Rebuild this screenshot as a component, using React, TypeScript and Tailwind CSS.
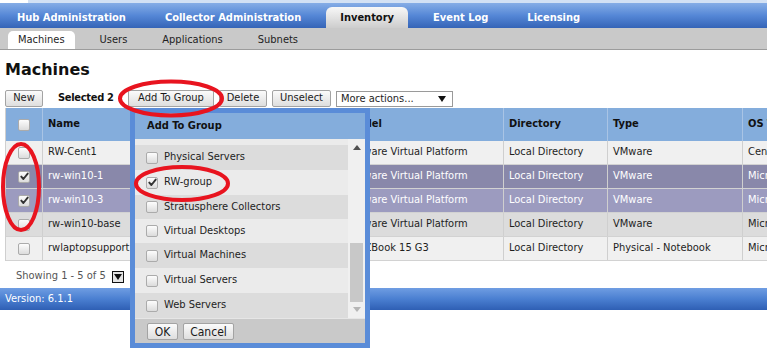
import React from "react";

function CheckMark({ color = "#333" }: { color?: string }) {
  return (
    <svg width="9" height="9" viewBox="0 0 9 9">
      <path d="M1.3 4.6 L3.4 7 L7.7 1.6" stroke={color} strokeWidth="1.9" fill="none" strokeLinecap="round" strokeLinejoin="round" />
    </svg>
  );
}

function Box({ checked }: { checked?: boolean }) {
  return (
    <span className="flex items-center justify-center w-[12px] h-[12px] rounded-[2px] border border-[#ababab] bg-gradient-to-b from-[#fdfdfd] to-[#dcdcdc] shrink-0">
      {checked && <CheckMark />}
    </span>
  );
}

function Btn({ children, className = "" }: { children: React.ReactNode; className?: string }) {
  return (
    <div className={"h-[17px] px-[7px] flex items-center border border-[#a3a3a3] rounded-[2px] bg-gradient-to-b from-[#fbfbfb] to-[#dedede] text-[#1a1a1a] whitespace-nowrap " + className}>
      {children}
    </div>
  );
}

const rows = [
  { name: "RW-Cent1", model: "VMware Virtual Platform", dir: "Local Directory", type: "VMware", os: "CentOS Linux 7", bg: "bg-[#f0f0f0]", text: "text-[#1e1e1e]", checked: false },
  { name: "rw-win10-1", model: "VMware Virtual Platform", dir: "Local Directory", type: "VMware", os: "Microsoft Windows 10", bg: "bg-[#8988aa]", text: "text-white", checked: true },
  { name: "rw-win10-3", model: "VMware Virtual Platform", dir: "Local Directory", type: "VMware", os: "Microsoft Windows 10", bg: "bg-[#9c9bbf]", text: "text-white", checked: true },
  { name: "rw-win10-base", model: "VMware Virtual Platform", dir: "Local Directory", type: "VMware", os: "Microsoft Windows 10", bg: "bg-[#dcdcdc]", text: "text-[#1e1e1e]", checked: false },
  { name: "rwlaptopsupport", model: "HP ZBook 15 G3", dir: "Local Directory", type: "Physical - Notebook", os: "Microsoft Windows 10", bg: "bg-[#f0f0f0]", text: "text-[#1e1e1e]", checked: false },
];

const groups = [
  { label: "Physical Desktops", bg: "bg-[#ebebeb]", h: "h-[25px] mt-[-19px]", checked: false },
  { label: "Physical Servers", bg: "bg-[#dcdcdc]", h: "h-[25px]", checked: false },
  { label: "RW-group", bg: "bg-[#ebebeb]", h: "h-[25px]", checked: true },
  { label: "Stratusphere Collectors", bg: "bg-[#dcdcdc]", h: "h-[24px]", checked: false },
  { label: "Virtual Desktops", bg: "bg-[#ebebeb]", h: "h-[24px]", checked: false },
  { label: "Virtual Machines", bg: "bg-[#dcdcdc]", h: "h-[25px]", checked: false },
  { label: "Virtual Servers", bg: "bg-[#ebebeb]", h: "h-[25px]", checked: false },
  { label: "Web Servers", bg: "bg-[#dcdcdc]", h: "h-[25px]", checked: false },
];

const cols = "grid grid-cols-[37px_300px_161px_104px_135px_200px]";

export default function App() {
  return (
    <div className="relative w-[767px] h-[357px] overflow-hidden bg-white font-['DejaVu_Sans_Condensed','DejaVu_Sans',sans-serif] [font-stretch:semi-condensed] text-[11px] text-[#1e1e1e]">
      {/* top strip */}
      <div className="flex h-[3px]">
        <div className="w-[28px] bg-white" />
        <div className="flex-1 bg-[#d3e1f4]" />
      </div>
      {/* main tabs */}
      <div className="h-[25px] flex items-end pl-[3px] gap-[11px] bg-gradient-to-b from-[#86ade6] via-[#5587d6] to-[#3564b7]">
        {["Hub Administration", "Collector Administration"].map((t) => (
          <div key={t} className="h-[21px] px-[14px] pt-[1px] flex items-center text-white font-bold">{t}</div>
        ))}
        <div className="h-[21px] px-[14px] pt-[1px] flex items-center font-bold text-[#111] rounded-t-[6px] bg-gradient-to-b from-[#f8f8f8] to-[#cdcdcd]">Inventory</div>
        {["Event Log", "Licensing"].map((t) => (
          <div key={t} className="h-[21px] px-[14px] pt-[1px] flex items-center text-white font-bold">{t}</div>
        ))}
      </div>
      {/* sub tabs */}
      <div className="h-[22px] flex items-end pl-[8px] gap-[15px] bg-[#c9c9c9] border-b border-[#9c9c9c]">
        <div className="h-[18px] px-[10px] flex items-center bg-white rounded-t-[5px]">Machines</div>
        <div className="h-[18px] px-[10px] flex items-center">Users</div>
        <div className="h-[18px] px-[10px] flex items-center">Applications</div>
        <div className="h-[18px] px-[10px] flex items-center">Subnets</div>
      </div>

      <div className="pl-[5px]">
        <h1 className="mt-[10px] h-[20px] leading-[20px] text-[16px] font-bold font-['DejaVu_Sans',sans-serif] [font-stretch:normal] text-[#111]">Machines</h1>
        {/* toolbar */}
        <div className="mt-[10px] h-[18px] flex items-start">
          <Btn className="w-[38px] justify-center">New</Btn>
          <div className="ml-[15px] w-[70px] h-[17px] flex items-center font-bold tracking-[-0.3px] text-[#111]">Selected 2</div>
          <Btn className="w-[86px] justify-center">Add To Group</Btn>
          <Btn className="ml-[5px] w-[48px] justify-center">Delete</Btn>
          <Btn className="ml-[5px] w-[59px] justify-center">Unselect</Btn>
          <div className="ml-[5px] mt-[1px] w-[117px] h-[16px] flex items-center justify-between pl-[4px] pr-[6px] border border-[#9a9a9a] bg-white">
            <span>More actions...</span>
            <svg width="8" height="6" viewBox="0 0 8 6"><path d="M0 0 H8 L4 6 Z" fill="#111" /></svg>
          </div>
        </div>
        {/* table */}
        <div className="w-[937px] border-l border-[#cfcfcf]">
          <div className={cols + " h-[33px] bg-[#84addc] font-bold text-[#111]"}>
            <div className="flex items-center justify-center border-r border-[#a9c4e5]"><Box /></div>
            <div className="flex items-center px-[5px] border-r border-[#a9c4e5]">Name</div>
            <div className="flex items-center px-[5px] border-r border-[#a9c4e5]">Model</div>
            <div className="flex items-center px-[5px] border-r border-[#a9c4e5]">Directory</div>
            <div className="flex items-center px-[5px] border-r border-[#a9c4e5]">Type</div>
            <div className="flex items-center px-[5px] border-r border-[#a9c4e5]">OS Type</div>
          </div>
          {rows.map((r) => (
            <div key={r.name} className={cols + " h-[24px] border-b border-[#d2d2d2] " + r.bg + " " + r.text}>
              <div className="flex items-center justify-center border-r border-[#cfcfcf]"><Box checked={r.checked} /></div>
              <div className="flex items-center px-[5px] border-r border-[#cfcfcf] whitespace-nowrap overflow-hidden">{r.name}</div>
              <div className="flex items-center px-[5px] border-r border-[#cfcfcf] whitespace-nowrap overflow-hidden">{r.model}</div>
              <div className="flex items-center px-[5px] border-r border-[#cfcfcf] whitespace-nowrap overflow-hidden">{r.dir}</div>
              <div className="flex items-center px-[5px] border-r border-[#cfcfcf] whitespace-nowrap overflow-hidden">{r.type}</div>
              <div className="flex items-center px-[5px] border-r border-[#cfcfcf] whitespace-nowrap overflow-hidden">{r.os}</div>
            </div>
          ))}
        </div>
        {/* paging */}
        <div className="h-[27px] pt-[4px] pl-[11px] flex items-center gap-[6px] text-[#555]">
          <span>Showing 1 - 5 of 5</span>
          <span className="w-[12px] h-[12px] border border-[#111] bg-[#e4e4e4] flex items-center justify-center">
            <svg width="8" height="6" viewBox="0 0 8 6"><path d="M0 0 H8 L4 6 Z" fill="#111" /></svg>
          </span>
        </div>
      </div>
      {/* footer */}
      <div className="h-[22px] pl-[5px] flex items-center text-white bg-gradient-to-b from-[#6f9de2] via-[#4a7fd1] to-[#2f5fb4]">Version: 6.1.1</div>

      {/* popup */}
      <div className="absolute left-[130px] top-[108px] w-[240px] h-[240px] border-[5px] border-[#5a8cd8] flex flex-col bg-[#ebebeb]">
        <div className="h-[26px] bg-[#84addc] flex items-center pl-[12px] font-bold text-[#111]">Add To Group</div>
        <div className="h-[179px] flex">
          <div className="w-[213px] overflow-hidden flex flex-col">
            {groups.map((g) => (
              <div key={g.label} className={"shrink-0 flex items-center pl-[11px] gap-[6px] " + g.bg + " " + g.h}>
                <Box checked={g.checked} />
                <span className="whitespace-nowrap">{g.label}</span>
              </div>
            ))}
          </div>
          <div className="w-[17px] bg-[#f0f0f0] flex flex-col">
            <div className="h-[17px] flex items-center justify-center">
              <svg width="8" height="5" viewBox="0 0 8 5"><path d="M0 5 H8 L4 0 Z" fill="#505050" /></svg>
            </div>
            <div className="flex-1">
              <div className="ml-[2px] mt-[87px] w-[13px] h-[59px] bg-[#c8c8c8]" />
            </div>
            <div className="h-[17px] flex items-center justify-center">
              <svg width="8" height="5" viewBox="0 0 8 5"><path d="M0 0 H8 L4 5 Z" fill="#b5b5b5" /></svg>
            </div>
          </div>
        </div>
        <div className="h-[25px] bg-[#c9c9c9] border-t border-[#e6e6e6] flex items-start pt-[4px] pl-[12px] gap-[5px]">
          <Btn className="w-[31px] justify-center text-[12px]">OK</Btn>
          <Btn className="w-[51px] justify-center text-[12px]">Cancel</Btn>
        </div>
      </div>

      {/* red annotation ellipses */}
      <svg className="absolute left-0 top-0 pointer-events-none" width="767" height="357" viewBox="0 0 767 357">
        <ellipse cx="171" cy="98.5" rx="51" ry="17" fill="none" stroke="#e8141f" strokeWidth="4" />
        <ellipse cx="21" cy="187" rx="18" ry="43" fill="none" stroke="#e8141f" strokeWidth="4" />
        <ellipse cx="182" cy="183.5" rx="46" ry="16.5" fill="none" stroke="#e8141f" strokeWidth="4" />
      </svg>
    </div>
  );
}
